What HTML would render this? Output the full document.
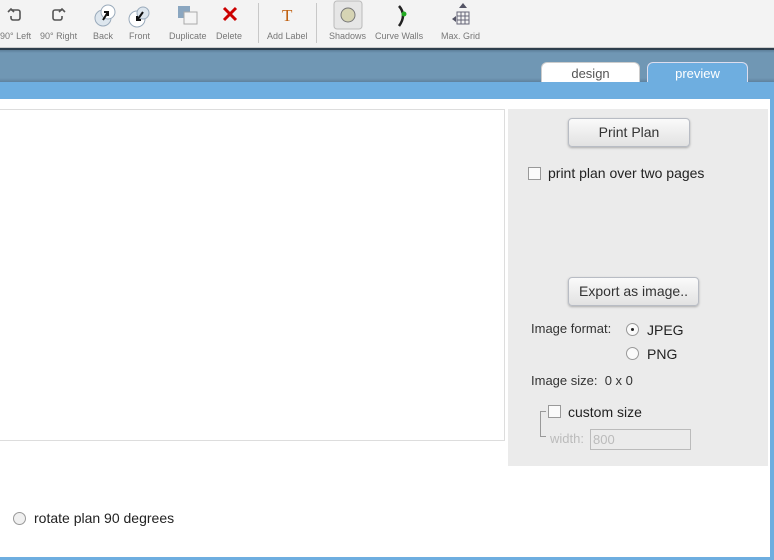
<!DOCTYPE html>
<html><head><meta charset="utf-8"><style>
*{margin:0;padding:0;box-sizing:border-box}
body{width:774px;height:560px;overflow:hidden;background:#fff;font-family:"Liberation Sans",sans-serif;position:relative}
.abs{position:absolute}
.tb{left:0;top:0;width:774px;height:48px;background:#f3f3f3;border-bottom:1px solid #ccc}
.lbl{position:absolute;top:31px;font-size:9px;color:#777;white-space:nowrap}
.sep{position:absolute;top:3px;width:1px;height:40px;background:#c8c8c8}
.btn{position:absolute;background:linear-gradient(#fafafa,#e2e2e2);border:1px solid #b8bcc4;border-radius:4px;box-shadow:0 1px 2px #aaa;font-size:14px;color:#333;text-align:center}
.cb{position:absolute;width:13px;height:13px;border:1px solid #999;background:#fafafa}
.rd{position:absolute;width:13px;height:13px;border:1px solid #999;border-radius:50%;background:#fafafa}
.t{position:absolute;font-size:14px;color:#222;white-space:nowrap}
</style></head><body>
<div class="abs tb"></div>
<svg class="abs" style="left:0;top:0" width="480" height="30">
<g fill="none" stroke="#555" stroke-width="1.6">
<path d="M11 10 h7 a2 2 0 0 1 2 2 v6 a2 2 0 0 1 -2 2 h-5 a2 2 0 0 1 -2 -2 v-2"/>
<path d="M8 12 l3 -3 3 3" />
<path d="M62 10 h-7 a2 2 0 0 0 -2 2 v6 a2 2 0 0 0 2 2 h5 a2 2 0 0 0 2 -2 v-2"/>
<path d="M65 12 l-3 -3 -3 3"/>
</g>
<circle cx="103" cy="18" r="8" fill="#dde6ee" stroke="#9ab"/>
<circle cx="108" cy="12" r="7" fill="#fff" stroke="#9ab"/>
<path d="M103 20 l5 -8 M104 12 h4 v4" stroke="#111" stroke-width="2" fill="none"/>
<circle cx="137" cy="19" r="8" fill="#fff" stroke="#9ab"/>
<circle cx="143" cy="13" r="6" fill="#dde6ee" stroke="#9ab"/>
<path d="M143 12 l-5 7 M137 16 v4 h4" stroke="#111" stroke-width="2" fill="none"/>
<rect x="178" y="6" width="12" height="12" fill="#8aa6c0"/>
<rect x="184" y="12" width="13" height="12" fill="#f4f4f4" stroke="#aaa"/>
<path d="M224 8 l12 12 M236 8 l-12 12" stroke="#c00" stroke-width="3"/>
<text x="282" y="21" font-family="Liberation Serif" font-size="17" fill="#c06010">T</text>
<rect x="334" y="1" width="28" height="28" rx="3" fill="#e6e6e6" stroke="#bbb"/>
<circle cx="348" cy="15" r="7" fill="#d6d4b4" stroke="#777"/>
<path d="M399 6 q8 9 0 20" stroke="#222" stroke-width="2.5" fill="none"/>
<circle cx="404" cy="14" r="2.5" fill="#2a2"/>
<path d="M463 3 l4 5 h-8z M452 19 l4 -3 v6z" fill="#556"/>
<g stroke="#667" fill="none"><rect x="457" y="12" width="12" height="12"/><path d="M461 12v12M465 12v12M457 16h12M457 20h12"/></g>
</svg>
<div class="lbl" style="left:0">90° Left</div>
<div class="lbl" style="left:40px">90° Right</div>
<div class="lbl" style="left:93px">Back</div>
<div class="lbl" style="left:129px">Front</div>
<div class="lbl" style="left:169px">Duplicate</div>
<div class="lbl" style="left:216px">Delete</div>
<div class="sep" style="left:258px"></div>
<div class="lbl" style="left:267px">Add Label</div>
<div class="sep" style="left:316px"></div>
<div class="lbl" style="left:329px">Shadows</div>
<div class="lbl" style="left:375px">Curve Walls</div>
<div class="lbl" style="left:441px">Max. Grid</div>
<div class="abs" style="left:0;top:48px;width:774px;height:34px;background:linear-gradient(#2d3e4c 0,#2d3e4c 2px,#5d7f99 2px,#7097b4 5px,#7097b4 30px,#5f829e 34px)"></div>
<div class="abs" style="left:541px;top:62px;width:99px;height:21px;background:#fff;border:1px solid #ccc;border-bottom:none;border-radius:6px 6px 0 0;font-size:13px;color:#555;text-align:center;line-height:22px">design</div>
<div class="abs" style="left:647px;top:62px;width:101px;height:21px;background:#6eaee0;border:1px solid #dde;border-bottom:none;border-radius:6px 6px 0 0;font-size:13px;color:#fff;text-align:center;line-height:22px">preview</div>
<div class="abs" style="left:0;top:82px;width:774px;height:17px;background:#6eaee0"></div>
<div class="abs" style="left:770px;top:82px;width:4px;height:478px;background:#6eaee0"></div>
<div class="abs" style="left:0;top:557px;width:774px;height:3px;background:#6eaee0"></div>
<div class="abs" style="left:-1px;top:109px;width:506px;height:332px;border:1px solid #ddd"></div>
<div class="abs" style="left:508px;top:109px;width:260px;height:357px;background:#ebebeb"></div>
<div class="btn" style="left:568px;top:118px;width:122px;height:29px;line-height:27px">Print Plan</div>
<div class="cb" style="left:528px;top:167px"></div>
<div class="t" style="left:548px;top:165px">print plan over two pages</div>
<div class="btn" style="left:568px;top:277px;width:131px;height:29px;line-height:27px">Export as image..</div>
<div class="t" style="left:531px;top:321px;font-size:13px;color:#333">Image format:</div>
<div class="rd" style="left:626px;top:323px"></div>
<div class="abs" style="left:631px;top:328px;width:3px;height:3px;background:#222;border-radius:50%"></div>
<div class="t" style="left:647px;top:322px">JPEG</div>
<div class="rd" style="left:626px;top:347px"></div>
<div class="t" style="left:647px;top:346px">PNG</div>
<div class="t" style="left:531px;top:373px;font-size:13px;color:#333">Image size:&nbsp; 0 x 0</div>
<div class="abs" style="left:540px;top:411px;width:6px;height:26px;border:1px solid #999;border-right:none"></div>
<div class="cb" style="left:548px;top:405px"></div>
<div class="t" style="left:568px;top:404px">custom size</div>
<div class="t" style="left:550px;top:431px;font-size:13px;color:#bbb">width:</div>
<div class="abs" style="left:590px;top:429px;width:101px;height:21px;border:1px solid #bbb;font-size:13px;color:#bbb;padding:2px 2px">800</div>
<div class="rd" style="left:13px;top:512px;background:#f0f0f0"></div>
<div class="t" style="left:34px;top:510px">rotate plan 90 degrees</div>
</body></html>
